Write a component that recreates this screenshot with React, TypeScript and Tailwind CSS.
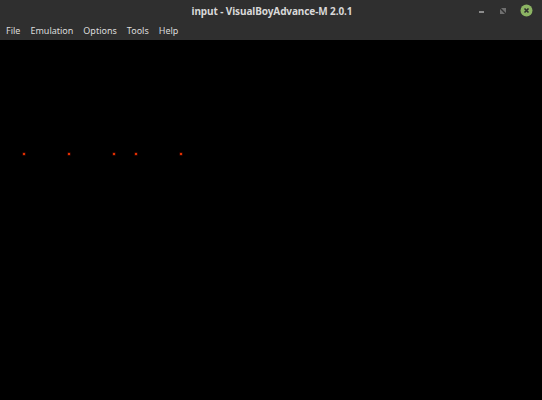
import React from 'react';

const menus = ['File', 'Emulation', 'Options', 'Tools', 'Help'];

// pixel dots drawn by the emulator
const dots = [24, 69, 114, 136, 181];

const App: React.FC = () => {
  return (
    <div className="w-[542px] h-[400px] bg-black flex flex-col overflow-hidden font-['Noto_Sans',sans-serif]">
      {/* Title bar */}
      <div className="h-[21px] bg-[#2f2f2f] flex items-center relative">
        <div className="flex-1 text-center text-[10px] font-bold text-[#d8d8d8] leading-none pt-[1px] pl-[2px] tracking-[-0.1px]">
          input - VisualBoyAdvance-M 2.0.1
        </div>
        <div className="absolute right-[9px] top-0 h-[21px] flex items-center gap-[13px]">
          <svg width="8" height="8" viewBox="0 0 8 8">
            <rect x="1" y="4" width="5" height="2" fill="#8c8c8c" />
          </svg>
          <svg width="8" height="8" viewBox="0 0 8 8">
            <path d="M2 1h5v5z M1 2l5 5h-5z" fill="#6f6f6f" />
          </svg>
          <svg width="13" height="13" viewBox="0 0 13 13">
            <circle cx="6.5" cy="6.5" r="6" fill="#8cb463" />
            <path d="M4.5 4.5l4 4M8.5 4.5l-4 4" stroke="#2f2f2f" strokeWidth="1.6" />
          </svg>
        </div>
      </div>
      {/* Menu bar */}
      <div className="h-[19px] bg-[#2f2f2f] flex items-center pl-[6px] gap-[10px] text-[9px] text-[#dcdcdc] leading-none">
        {menus.map((m) => (
          <span key={m}>{m}</span>
        ))}
      </div>
      {/* Screen */}
      <div className="flex-1 bg-black relative">
        <svg className="absolute inset-0" width="542" height="360">
          {dots.map((x) => (
            <g key={x}>
              <rect x={x - 1.5} y={112.5} width="3" height="3" fill="#5a0a00" />
              <rect x={x - 1} y={113} width="2" height="2" fill="#e03000" />
            </g>
          ))}
        </svg>
      </div>
    </div>
  );
};

export default App;
